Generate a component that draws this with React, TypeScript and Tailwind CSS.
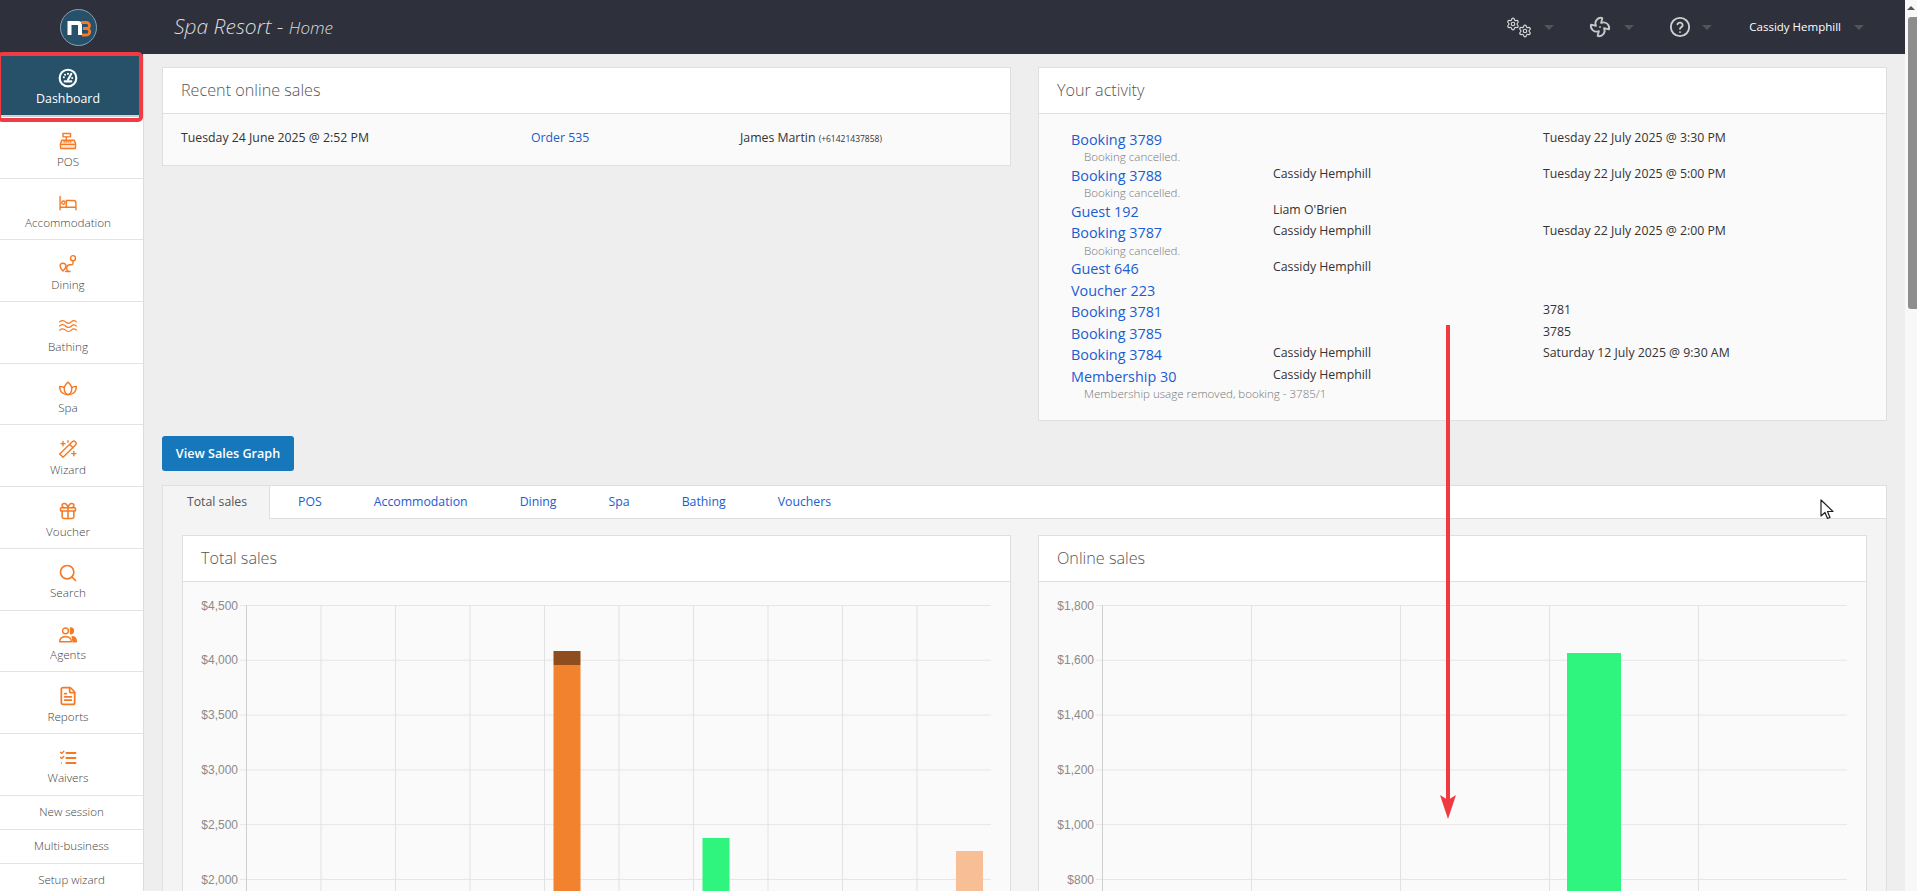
import { Fragment, type ReactNode } from "react";
import { Fan, FileText, Gift, Search, Settings } from "lucide-react";

const FONT = "font-['Open_Sans',sans-serif]";

function Icon({ children, width = 1.7 }: { children: ReactNode; width?: number }) {
  return (
    <svg viewBox="0 0 24 24" width="20" height="20" fill="none" stroke="#f47a26" strokeWidth={width} strokeLinecap="round" strokeLinejoin="round">
      {children}
    </svg>
  );
}

const navItems: { label: string; icon: ReactNode }[] = [
  {
    label: "POS",
    icon: (
      <Icon>
        <path d="M3 15l1.500-4h15l1.500 4v5a1 1 0 0 1-1 1H4a1 1 0 0 1-1-1z" fill="#fde3d0" />
        <path d="M3 16h18" />
        <rect x="6" y="3" width="9" height="4" />
        <path d="M10 7v4" />
        <path d="M7 13h10" strokeDasharray="1 1.500" />
      </Icon>
    ),
  },
  {
    label: "Accommodation",
    icon: (
      <Icon>
        <path d="M2.500 4v16M2.500 17h19M21.500 20v-8a3 3 0 0 0-3-3H10v8" />
        <circle cx="6.500" cy="11.500" r="2" />
      </Icon>
    ),
  },
  {
    label: "Dining",
    icon: (
      <Icon>
        <circle cx="18" cy="5" r="3" />
        <path d="M18 8v3a2 2 0 0 1-2 2h-1.500a2.500 2.500 0 0 0 0 8H9" />
        <path d="M6 11a3.500 3.500 0 0 0-3.500 3.500C2.500 17 6 20.500 6 20.500s3.500-3.500 3.500-6A3.500 3.500 0 0 0 6 11z" />
      </Icon>
    ),
  },
  {
    label: "Bathing",
    icon: (
      <Icon width={1.5}>
        <path d="M2 7c2.500-2 5-2 7 0s5 2 7 0 4.500-2 6 0" />
        <path d="M2 12c2.500-2 5-2 7 0s5 2 7 0 4.500-2 6 0" />
        <path d="M2 17c2.500-2 5-2 7 0s5 2 7 0 4.500-2 6 0" />
      </Icon>
    ),
  },
  {
    label: "Spa",
    icon: (
      <Icon>
        <path d="M12 20c-4.500 0-10-2-10-10 2 0 4 .500 5.500 1.500M12 20c4.500 0 10-2 10-10-2 0-4 .500-5.500 1.500" />
        <path d="M12 20c-3-1-4.500-4-4.500-7 0-3 2-6 4.500-8 2.500 2 4.500 5 4.500 8 0 3-1.500 6-4.500 7z" />
      </Icon>
    ),
  },
  {
    label: "Wizard",
    icon: (
      <Icon>
        <path d="M6 22l-4-4L17.500 3a2 2 0 0 1 2.800 0l1 1a2 2 0 0 1 0 2.800z" />
        <path d="M14 6.500l4 4" />
        <path d="M6 3v5M3.500 5.500h5M19 15v5M16.500 17.500h5M12 2v2" />
      </Icon>
    ),
  },
  { label: "Voucher", icon: <Gift size={20} color="#f47a26" strokeWidth={1.9} /> },
  { label: "Search", icon: <Search size={20} color="#f47a26" strokeWidth={2} /> },
  {
    label: "Agents",
    icon: (
      <Icon>
        <circle cx="9" cy="7" r="3.500" />
        <path d="M2 20c0-4 3-6 7-6s7 2 7 6z" />
        <path d="M15 3.500a3.500 3.500 0 0 1 0 7z" fill="#f47a26" />
        <path d="M17 14c3 0 5 2 5 6h-4c0-2-.500-4-1-6z" fill="#f47a26" />
      </Icon>
    ),
  },
  { label: "Reports", icon: <FileText size={20} color="#f47a26" strokeWidth={2.1} /> },
  {
    label: "Waivers",
    icon: (
      <Icon width={2.2}>
        <path d="M10 6h11M10 12h11M10 18h11" />
        <path d="M3 5l1.500 1.500L7 4M3 11l1.500 1.500L7 10M4 18h.01" strokeWidth={1.600} />
      </Icon>
    ),
  },
];

const activity = [
  { link: "Booking 3789", date: "Tuesday 22 July 2025 @ 3:30 PM", note: "Booking cancelled." },
  { link: "Booking 3788", name: "Cassidy Hemphill", date: "Tuesday 22 July 2025 @ 5:00 PM", note: "Booking cancelled." },
  { link: "Guest 192", name: "Liam O'Brien" },
  { link: "Booking 3787", name: "Cassidy Hemphill", date: "Tuesday 22 July 2025 @ 2:00 PM", note: "Booking cancelled." },
  { link: "Guest 646", name: "Cassidy Hemphill" },
  { link: "Voucher 223" },
  { link: "Booking 3781", date: "3781" },
  { link: "Booking 3785", date: "3785" },
  { link: "Booking 3784", name: "Cassidy Hemphill", date: "Saturday 12 July 2025 @ 9:30 AM" },
  { link: "Membership 30", name: "Cassidy Hemphill", note: "Membership usage removed, booking - 3785/1" },
];

const tabs = ["POS", "Accommodation", "Dining", "Spa", "Bathing", "Vouchers"];

function Panel({ title, className, children }: { title: string; className?: string; children: ReactNode }) {
  return (
    <div className={`border border-[#dfdfdf] bg-[#fafafa] ${className ?? ""}`}>
      <div className="h-[46px] border-b border-[#dfdfdf] bg-white pl-[18px] text-[16.200px] font-light leading-[45px] text-[#555]">{title}</div>
      {children}
    </div>
  );
}

function Chart({ labels, cols, bars }: { labels: string[]; cols: number; bars: { x: number; y: number; w: number; h: number; fill: string }[] }) {
  const left = 63;
  const width = 745;
  const step = width / cols;
  return (
    <svg width="810" height="330" className="block">
      {labels.map((l, i) => (
        <Fragment key={l}>
          <line x1={left - 6} x2={left + width} y1={23.5 + i * 54.8} y2={23.5 + i * 54.8} stroke="#e6e6e6" />
          <text x={left - 8} y={27.5 + i * 54.8} textAnchor="end" fontFamily="'Liberation Sans',sans-serif" fontSize="12" fill="#8a8a8a">
            {l}
          </text>
        </Fragment>
      ))}
      {Array.from({ length: cols }).map((_, i) => (
        <line key={i} x1={left + 0.5 + i * step} x2={left + 0.5 + i * step} y1="23" y2="330" stroke={i === 0 ? "#cfcfcf" : "#e2e2e2"} />
      ))}
      {bars.map((b, i) => (
        <rect key={i} x={b.x} y={b.y} width={b.w} height={b.h} fill={b.fill} />
      ))}
    </svg>
  );
}

function Caret() {
  return <span className="h-0 w-0 border-x-[5px] border-t-[5px] border-x-transparent border-t-[#555]" />;
}

export default function App() {
  return (
    <div className={`relative flex h-[891px] w-[1917px] flex-col overflow-hidden bg-[#eeeeee] ${FONT}`}>
      {/* Top bar */}
      <header className="flex h-[54px] shrink-0 items-center bg-[#2e303c]">
        <div className="w-[143px] pl-[60px]">
          <svg width="37" height="37" viewBox="0 0 37 37" className="block" fill="none">
            <circle cx="18.500" cy="18.500" r="18" fill="#27506b" stroke="#8aa3b3" />
            <path d="M9.500 26V14h8.500a2 2 0 0 1 2 2v10" stroke="#fff" strokeWidth="4" />
            <path d="M21 13.500h5.500a2.800 2.800 0 0 1 0 6H23m3.500 0a3 3 0 0 1 0 6.500H22" stroke="#f47a26" strokeWidth="2.800" />
          </svg>
        </div>
        <div className="ml-[31px] text-[21px] font-light italic text-[#dcdcdc]">
          Spa Resort - <span className="text-[17px]">Home</span>
        </div>
        <div className="ml-auto flex items-center pr-[53px]">
          <svg width="26" height="21" className="mr-3">
            <Settings x={0} y={0} width={14} height={14} color="#d8d8d8" strokeWidth={2} />
            <Settings x={12} y={7} width={14} height={14} color="#d8d8d8" strokeWidth={2} />
          </svg>
          <Caret />
          <Fan size={22} color="#c8c8c8" strokeWidth={2} className="ml-[35px] mr-[13px]" />
          <Caret />
          <svg width="22" height="22" viewBox="0 0 24 24" fill="none" stroke="#d0d0d0" strokeWidth="2" strokeLinecap="round" className="ml-[35px] mr-[11px]">
            <circle cx="12" cy="12" r="10" />
            <path d="M9.200 9a3 3 0 0 1 5.700 1c0 2-2.900 2.500-2.900 4" />
            <path d="M12 17.500h.01" />
          </svg>
          <Caret />
          <span className="ml-[37px] mr-[13px] text-[11.500px] font-medium text-white">Cassidy Hemphill</span>
          <Caret />
        </div>
      </header>

      <div className="flex min-h-0 flex-1">
        {/* Sidebar */}
        <nav className="w-[144px] shrink-0 border-r border-[#dcdcdc] bg-white text-[11.700px] font-light text-[#444]">
          <div className="h-[63px] border-b-2 border-[#c9d3da] bg-[#275069] pr-[7px] pt-[14px] text-white">
            <div className="flex flex-col items-center gap-[3px]">
              <svg width="20" height="20" viewBox="0 0 24 24" fill="none" stroke="#fff" strokeWidth="2.500">
                <circle cx="12" cy="12" r="10" />
                <path d="M12 14l4-7" strokeLinecap="round" />
                <path d="M7 11h.01M12 7h.01M8.500 8h.01M17 12h.01M8 16h8" strokeLinecap="round" />
              </svg>
              <span className="text-[12.400px] font-normal leading-4">Dashboard</span>
            </div>
          </div>
          {navItems.map((item) => (
            <div key={item.label} className="flex h-[61.700px] flex-col items-center gap-[1.500px] border-b border-[#e6e1e6] pr-[7px] pt-[14px]">
              {item.icon}
              <span className="leading-4">{item.label}</span>
            </div>
          ))}
          {["New session", "Multi-business", "Setup wizard"].map((label) => (
            <div key={label} className="flex h-[34px] items-center justify-center border-b border-[#e6e1e6] text-[11.500px]">
              {label}
            </div>
          ))}
        </nav>

        {/* Main */}
        <main className="min-w-0 flex-1 pl-[18px] pr-[30px] pt-[13px] text-[12.300px] text-[#333]">
          <div className="flex items-start gap-[27px]">
            <Panel title="Recent online sales" className="w-[849px]">
              <div className="flex h-[51px] items-center pb-[2px] pl-[18px]">
                <span className="w-[350px]">Tuesday 24 June 2025 @ 2:52 PM</span>
                <span className="w-[209px] text-[#1a5dd0]">Order 535</span>
                <span>
                  James Martin <span className="text-[8.500px]">(+61421437858)</span>
                </span>
              </div>
            </Panel>
            <Panel title="Your activity" className="w-[849px]">
              <div className="h-[306px] px-[32px] pt-[14.500px]">
                {activity.map((row) => (
                  <div key={row.link} className="grid grid-cols-[202px_270px_1fr]">
                    <div>
                      <div className="text-[14.400px] leading-[21.500px] text-[#1a5dd0]">{row.link}</div>
                      {row.note && <div className="whitespace-nowrap pl-[13px] text-[11.550px] font-light leading-[14.500px] text-[#777]">{row.note}</div>}
                    </div>
                    <div className="pt-px leading-[16px]">{row.name}</div>
                    <div className="pt-px leading-[16px]">{row.date}</div>
                  </div>
                ))}
              </div>
            </Panel>
          </div>

          <button className="mt-[15px] block h-[35px] w-[132px] rounded-[3px] bg-[#1777bb] pt-[2px] text-[12.600px] font-semibold text-white">View Sales Graph</button>

          <div className="mt-[14px] border border-[#dfdfdf] bg-[#f4f4f4]">
            <div className="flex h-[33px] border-b border-[#dfdfdf] bg-white">
              <div className="-mb-px mr-[2px] flex w-[107px] items-center justify-center border-r border-[#dfdfdf] bg-[#f4f4f4] pl-[2px] text-[#555]">Total sales</div>
              {tabs.map((t) => (
                <div key={t} className="flex items-center px-[26px] text-[#1a5dd0]">
                  {t}
                </div>
              ))}
            </div>
            <div className="flex gap-[27px] px-[19px] pt-[16px]">
              <Panel title="Total sales" className="w-[829px]">
                <Chart
                  cols={10}
                  labels={["$4,500", "$4,000", "$3,500", "$3,000", "$2,500", "$2,000"]}
                  bars={[
                    { x: 370.5, y: 69, w: 27, h: 14, fill: "#8f4c1c" },
                    { x: 370.5, y: 83, w: 27, h: 250, fill: "#f3822f" },
                    { x: 519.5, y: 256, w: 27, h: 80, fill: "#2ff57f" },
                    { x: 773, y: 269, w: 27, h: 70, fill: "#f8be95" },
                  ]}
                />
              </Panel>
              <Panel title="Online sales" className="w-[829px]">
                <Chart
                  cols={5}
                  labels={["$1,800", "$1,600", "$1,400", "$1,200", "$1,000", "$800"]}
                  bars={[{ x: 528, y: 71, w: 54, h: 260, fill: "#2ff57f" }]}
                />
              </Panel>
            </div>
          </div>
        </main>
      </div>

      {/* Browser scrollbar over the header */}
      <div className="absolute right-0 top-0 h-full w-[12px] bg-[#f8f8f8]">
        <div className="mx-auto mt-[6px] h-0 w-0 border-x-[4px] border-b-[4px] border-x-transparent border-b-[#555]" />
        <div className="ml-[3px] mt-[7px] h-[292px] rounded-l-[3px] bg-[#8d8d8d]" />
      </div>

      {/* Annotations on top of the page */}
      <div className="absolute left-[-3px] top-[52px] h-[70px] w-[146px] rounded-[5px] border-4 border-[#ef3b41]" />
      <svg className="absolute left-[1436px] top-[325px]" width="24" height="496" viewBox="0 0 24 496">
        <rect x="10" y="0" width="4" height="475" fill="#ef3b3f" />
        <path d="M4 470l8 5 8-5-8 24z" fill="#ef3b3f" />
      </svg>
      <svg className="absolute left-[1820px] top-[499px]" width="14" height="22" viewBox="0 0 14 22">
        <path d="M1 1v16l4-3.500 2.500 6 2.500-1-2.500-6H13z" fill="#fff" stroke="#222" strokeWidth="1.200" strokeLinejoin="round" />
      </svg>
    </div>
  );
}
